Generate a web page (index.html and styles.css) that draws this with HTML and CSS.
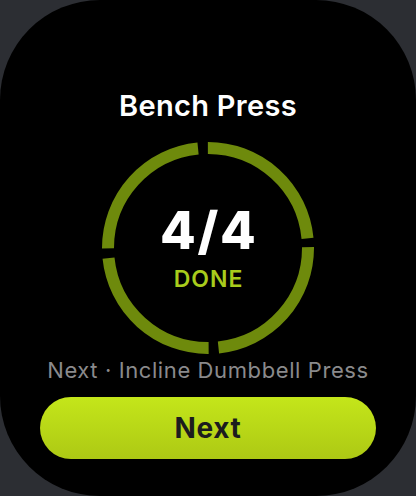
FILE: index.html
```html
<!DOCTYPE html>
<html lang="en">
<head>
<meta charset="utf-8">
<title>Bench Press</title>
<link rel="stylesheet" href="styles.css">
</head>
<body>
<div class="screen">
  <h1 class="title">Bench Press</h1>
  <div class="ring">
    <svg class="ring-svg" width="212" height="212" viewBox="0 0 212 212">
      <circle cx="106" cy="106" r="100" fill="none" stroke="#6e8a0c" stroke-width="12" stroke-dasharray="147.08 10" transform="rotate(-0.5 106 106)"/>
    </svg>
    <div class="ring-text">
      <div class="count">4/4</div>
      <div class="status">DONE</div>
    </div>
  </div>
  <p class="next-label">Next · Incline Dumbbell Press</p>
  <button class="next-btn">Next</button>
</div>
</body>
</html>
```
FILE: styles.css
```css
html, body {
  margin: 0;
  padding: 0;
  background: #2c2e33;
}
body {
  width: 416px;
  height: 496px;
  overflow: hidden;
  font-family: Inter, "Noto Sans", "Liberation Sans", sans-serif;
}
.screen {
  width: 416px;
  height: 496px;
  background: #000;
  border-radius: 100px;
  display: flex;
  flex-direction: column;
  align-items: center;
  box-sizing: border-box;
  padding-top: 89px;
}
.title {
  margin: 0;
  font-size: 29px;
  line-height: 34px;
  font-weight: 600;
  letter-spacing: 0.3px;
  color: #fff;
}
.ring {
  margin-top: 19px;
  width: 212px;
  height: 212px;
  display: grid;
}
.ring-svg {
  grid-area: 1 / 1;
  display: block;
}
.ring-text {
  grid-area: 1 / 1;
  display: flex;
  flex-direction: column;
  align-items: center;
  justify-content: center;
}
.count {
  font-size: 52px;
  line-height: 52px;
  font-weight: 800;
  letter-spacing: 1.7px;
  margin-right: -1.7px;
  color: #fff;
}
.status {
  margin-top: 10px;
  margin-right: -1px;
  font-size: 23px;
  line-height: 25px;
  font-weight: 600;
  letter-spacing: 1px;
  color: #a8cc1c;
}
.next-label {
  margin: 3px 0 0;
  font-size: 22px;
  line-height: 26px;
  font-weight: 400;
  letter-spacing: 0.6px;
  color: #8a8a8c;
}
.next-btn {
  margin-top: 14px;
  width: 336px;
  height: 62px;
  border: none;
  border-radius: 31px;
  background: linear-gradient(180deg, #c4e61a 0%, #adc914 100%);
  color: #1c1c1e;
  font-family: inherit;
  font-size: 28px;
  font-weight: 700;
  letter-spacing: 0.7px;
  padding: 0;
}
```
